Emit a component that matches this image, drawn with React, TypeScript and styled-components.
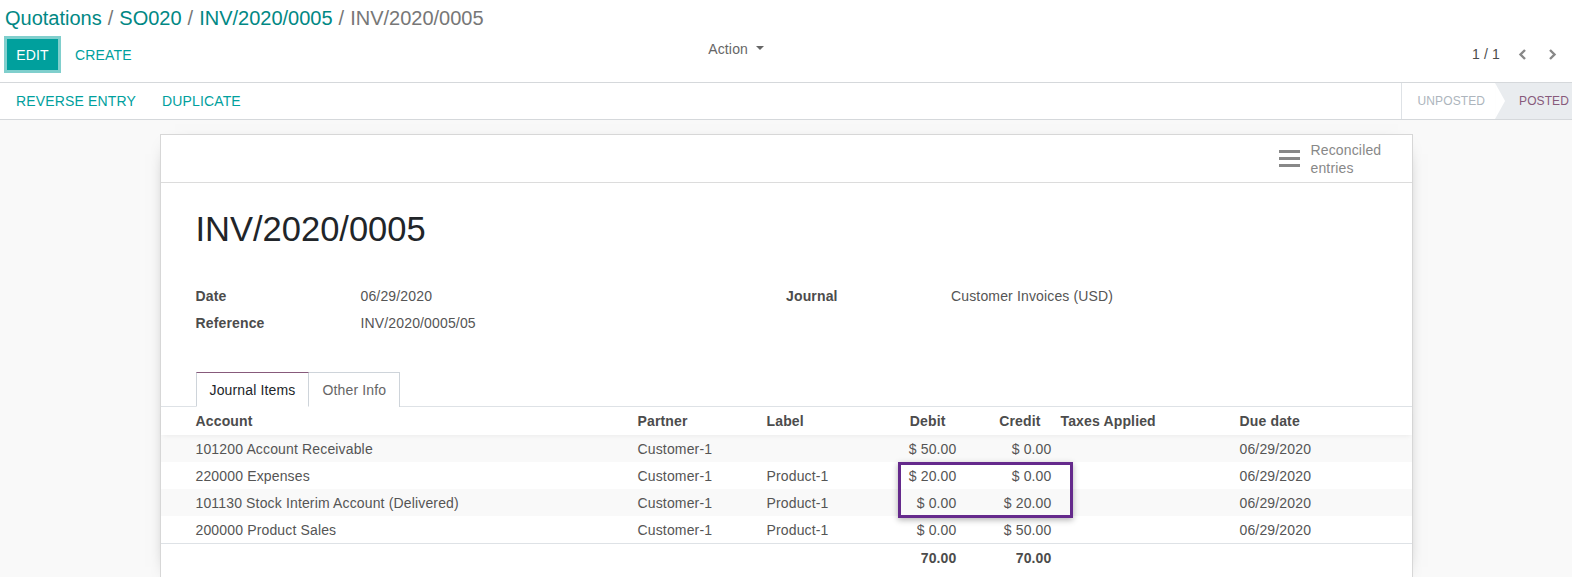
import React from "react";
import styled, { createGlobalStyle } from "styled-components";

const GlobalStyle = createGlobalStyle`
  html, body { margin: 0; padding: 0; }
  body {
    font-family: "Liberation Sans", Arial, sans-serif;
    font-size: 14px;
    letter-spacing: 0.15px;
    color: #4c4c4c;
    background: #f9f9f9;
    overflow: hidden;
  }
  * { box-sizing: border-box; }
`;

const TEAL = "#00A09D";
const TEAL_DARK = "#018884";
const PURPLE = "#875A7B";

const Page = styled.div`
  width: 1572px;
  height: 577px;
  overflow: hidden;
  display: flex;
  flex-direction: column;
  background: #f9f9f9;
`;

const ControlPanel = styled.div`
  background: #fff;
  height: 83px;
  border-bottom: 1px solid #d5d8db;
  display: flex;
  flex-direction: column;
`;

const Breadcrumbs = styled.div`
  height: 36px;
  line-height: 36px;
  padding-left: 5px;
  font-size: 20px;
  letter-spacing: 0;
  color: #777;
  white-space: nowrap;
`;

const Crumb = styled.a<{ $active?: boolean }>`
  color: ${(p) => (p.$active ? "#777" : TEAL_DARK)};
  text-decoration: none;
`;

const Sep = styled.span`
  color: #777;
  padding: 0 6px;
`;

const ButtonsRow = styled.div`
  display: grid;
  grid-template-columns: 786px 1fr;
  height: 46px;
`;

const LeftCell = styled.div`
  display: flex;
  align-items: flex-start;
  padding-left: 4px;
`;

const PrimaryButton = styled.button`
  margin: 3px;
  width: 51px;
  height: 31px;
  border: none;
  background: ${TEAL};
  color: #fff;
  font-family: inherit;
  font-size: 14px;
  letter-spacing: inherit;
  box-shadow: 0 0 0 3px #80cfcd;
  padding: 0;
`;

const LinkButton = styled.button`
  margin-top: 3px;
  margin-left: 2px;
  height: 31px;
  border: none;
  background: transparent;
  color: ${TEAL};
  font-family: inherit;
  font-size: 14px;
  letter-spacing: inherit;
  padding: 0 12px;
`;

const ActionToggle = styled.div`
  margin-left: auto;
  margin-right: 22px;
  height: 26px;
  line-height: 26px;
  display: flex;
  align-items: center;
  gap: 8px;
  color: #666;
  font-size: 14px;
`;

const Caret = styled.span`
  width: 0;
  height: 0;
  border-left: 4px solid transparent;
  border-right: 4px solid transparent;
  border-top: 4px solid #666;
  margin-top: -2px;
`;

const RightCell = styled.div`
  display: flex;
  justify-content: flex-end;
  align-items: flex-start;
  padding-right: 15px;
`;

const Pager = styled.div`
  display: flex;
  align-items: center;
  height: 36px;
  color: #4c4c4c;
  font-size: 14px;
`;

const PagerValue = styled.span`
  margin-right: 18px;
`;

const PagerArrow = styled.span`
  display: inline-flex;
  & + & {
    margin-left: 21px;
  }
`;

const StatusBar = styled.div`
  background: #fff;
  height: 37px;
  border-bottom: 1px solid #d5d8db;
  display: flex;
  align-items: stretch;
  justify-content: space-between;
`;

const StatusButtons = styled.div`
  display: flex;
  align-items: center;
  padding-left: 16px;
  gap: 26px;
`;

const StatusLink = styled.span`
  color: ${TEAL};
  font-size: 14px;
`;

const Stages = styled.div`
  display: flex;
  align-items: stretch;
  border-left: 1px solid #dee2e6;
`;

const Stage = styled.div<{ $current?: boolean }>`
  position: relative;
  display: flex;
  align-items: center;
  font-size: 12px;
  letter-spacing: 0.1px;
  padding: ${(p) => (p.$current ? "0 3px 0 24px" : "0 10px 0 16px")};
  color: ${(p) => (p.$current ? PURPLE : "#adb5bd")};
  background: ${(p) => (p.$current ? "#e9ecef" : "#fff")};
  ${(p) =>
    !p.$current &&
    `
    &::after {
      content: "";
      position: absolute;
      top: 0;
      right: -10px;
      width: 10px;
      height: 100%;
      background: #fff;
      clip-path: polygon(0 0, 100% 50%, 0 100%);
      z-index: 1;
    }
  `}
`;

const SheetArea = styled.div`
  flex: 1;
  padding-top: 14px;
  display: flex;
  justify-content: center;
  overflow: hidden;
`;

const Sheet = styled.div`
  width: 1253px;
  background: #fff;
  border: 1px solid #d7d7d7;
  border-bottom: none;
  box-shadow: 0 5px 20px -15px #000;
`;

const ButtonBox = styled.div`
  height: 48px;
  border-bottom: 1px solid #dcdcdc;
  display: flex;
  justify-content: flex-end;
`;

const StatButton = styled.div`
  width: 152px;
  display: flex;
  align-items: center;
  gap: 11px;
  padding-left: 19px;
  color: #888;
  font-size: 14px;
  line-height: 18px;
`;

const SheetBody = styled.div`
  padding: 24px 35px 0;
`;

const Title = styled.h1`
  margin: 0;
  font-weight: normal;
  font-size: 34.5px;
  letter-spacing: 0;
  line-height: 44px;
  color: #212529;
`;

const Groups = styled.div`
  display: grid;
  grid-template-columns: 1fr 1fr;
  margin-top: 31px;
`;

const FieldGroup = styled.div`
  display: grid;
  grid-template-columns: 165px 1fr;
  grid-auto-rows: 27px;
  align-items: center;
`;

const FieldLabel = styled.div`
  font-weight: bold;
  color: #4c4c4c;
`;

const FieldValue = styled.div`
  color: #555;
`;

const TabsBar = styled.div`
  margin: 36px -35px 0;
  padding: 0 35px;
  display: flex;
  border-bottom: 1px solid #dee2e6;
  height: 35px;
`;

const Tab = styled.div<{ $active?: boolean }>`
  height: 35px;
  padding: 0 13px;
  display: flex;
  align-items: center;
  font-size: 14px;
  border: 1px solid #ced4da;
  border-top-color: ${(p) => (p.$active ? PURPLE : "#ced4da")};
  border-bottom: ${(p) => (p.$active ? "1px solid #fff" : "none")};
  background: #fff;
  color: ${(p) => (p.$active ? "#212529" : "#666")};
  margin-left: ${(p) => (p.$active ? "0" : "-1px")};
  margin-bottom: ${(p) => (p.$active ? "-1px" : "0")};
  position: relative;
  z-index: ${(p) => (p.$active ? 1 : 0)};
`;

const TableWrap = styled.div`
  margin: 0 -35px;
  position: relative;
`;

const COLS = "477px 129px 113px 77px 95px 188px 1fr";

const HeaderRow = styled.div`
  display: grid;
  grid-template-columns: ${COLS};
  height: 28px;
  align-items: center;
  font-weight: bold;
  color: #4c4c4c;
  position: relative;
  z-index: 1;
  box-shadow: 0 3px 5px -2px rgba(0, 0, 0, 0.06);
`;

const Row = styled.div<{ $striped?: boolean }>`
  display: grid;
  grid-template-columns: ${COLS};
  height: 27px;
  align-items: center;
  color: #555;
  background: ${(p) => (p.$striped ? "#f9f9f9" : "#fff")};
`;

const FooterRow = styled.div`
  display: grid;
  grid-template-columns: ${COLS};
  height: 28px;
  align-items: center;
  border-top: 1px solid #dee2e6;
  font-weight: bold;
  color: #4c4c4c;
`;

const Cell = styled.div<{ $num?: boolean; $head?: boolean; $first?: boolean; $pad?: number }>`
  white-space: nowrap;
  text-align: ${(p) => (p.$num ? "right" : "left")};
  padding-left: ${(p) => (p.$first ? "35px" : p.$pad ? `${p.$pad}px` : "0")};
  padding-right: ${(p) => (p.$num && p.$head ? "11px" : "0")};
`;

const Highlight = styled.div`
  position: absolute;
  left: 737px;
  top: 55px;
  width: 175px;
  height: 56px;
  border: 3px solid #652a8c;
  box-shadow: 0 2px 6px rgba(0, 0, 0, 0.3);
  pointer-events: none;
`;

const BarsIcon = () => (
  <svg width="21" height="17" viewBox="0 0 21 17" fill="#888">
    <rect x="0" y="0" width="21" height="3" />
    <rect x="0" y="7" width="21" height="3" />
    <rect x="0" y="14" width="21" height="3" />
  </svg>
);

const Chevron = ({ dir }: { dir: "left" | "right" }) => (
  <svg width="9" height="11" viewBox="0 0 9 11">
    <polyline
      points={dir === "left" ? "7,1 2.5,5.5 7,10" : "2,1 6.5,5.5 2,10"}
      fill="none"
      stroke="#888"
      strokeWidth="2.4"
    />
  </svg>
);

type Line = {
  account: string;
  partner: string;
  label: string;
  debit: string;
  credit: string;
  due: string;
};

const lines: Line[] = [
  { account: "101200 Account Receivable", partner: "Customer-1", label: "", debit: "$ 50.00", credit: "$ 0.00", due: "06/29/2020" },
  { account: "220000 Expenses", partner: "Customer-1", label: "Product-1", debit: "$ 20.00", credit: "$ 0.00", due: "06/29/2020" },
  { account: "101130 Stock Interim Account (Delivered)", partner: "Customer-1", label: "Product-1", debit: "$ 0.00", credit: "$ 20.00", due: "06/29/2020" },
  { account: "200000 Product Sales", partner: "Customer-1", label: "Product-1", debit: "$ 0.00", credit: "$ 50.00", due: "06/29/2020" },
];

export default function App() {
  return (
    <Page>
      <GlobalStyle />
      <ControlPanel>
        <Breadcrumbs>
          <Crumb>Quotations</Crumb>
          <Sep>/</Sep>
          <Crumb>SO020</Crumb>
          <Sep>/</Sep>
          <Crumb>INV/2020/0005</Crumb>
          <Sep>/</Sep>
          <Crumb $active>INV/2020/0005</Crumb>
        </Breadcrumbs>
        <ButtonsRow>
          <LeftCell>
            <PrimaryButton>EDIT</PrimaryButton>
            <LinkButton>CREATE</LinkButton>
            <ActionToggle>
              Action <Caret />
            </ActionToggle>
          </LeftCell>
          <RightCell>
            <Pager>
              <PagerValue>1 / 1</PagerValue>
              <PagerArrow>
                <Chevron dir="left" />
              </PagerArrow>
              <PagerArrow>
                <Chevron dir="right" />
              </PagerArrow>
            </Pager>
          </RightCell>
        </ButtonsRow>
      </ControlPanel>

      <StatusBar>
        <StatusButtons>
          <StatusLink>REVERSE ENTRY</StatusLink>
          <StatusLink>DUPLICATE</StatusLink>
        </StatusButtons>
        <Stages>
          <Stage>UNPOSTED</Stage>
          <Stage $current>POSTED</Stage>
        </Stages>
      </StatusBar>

      <SheetArea>
        <Sheet>
          <ButtonBox>
            <StatButton>
              <BarsIcon />
              <span>
                Reconciled
                <br />
                entries
              </span>
            </StatButton>
          </ButtonBox>
          <SheetBody>
            <Title>INV/2020/0005</Title>
            <Groups>
              <FieldGroup>
                <FieldLabel>Date</FieldLabel>
                <FieldValue>06/29/2020</FieldValue>
                <FieldLabel>Reference</FieldLabel>
                <FieldValue>INV/2020/0005/05</FieldValue>
              </FieldGroup>
              <FieldGroup>
                <FieldLabel>Journal</FieldLabel>
                <FieldValue>Customer Invoices (USD)</FieldValue>
              </FieldGroup>
            </Groups>
            <TabsBar>
              <Tab $active>Journal Items</Tab>
              <Tab>Other Info</Tab>
            </TabsBar>
            <TableWrap>
              <HeaderRow>
                <Cell $first>Account</Cell>
                <Cell>Partner</Cell>
                <Cell>Label</Cell>
                <Cell $num $head>Debit</Cell>
                <Cell $num $head>Credit</Cell>
                <Cell $pad={9}>Taxes Applied</Cell>
                <Cell>Due date</Cell>
              </HeaderRow>
              {lines.map((l, i) => (
                <Row key={i} $striped={i % 2 === 0}>
                  <Cell $first>{l.account}</Cell>
                  <Cell>{l.partner}</Cell>
                  <Cell>{l.label}</Cell>
                  <Cell $num>{l.debit}</Cell>
                  <Cell $num>{l.credit}</Cell>
                  <Cell $pad={9}></Cell>
                  <Cell>{l.due}</Cell>
                </Row>
              ))}
              <FooterRow>
                <Cell $first></Cell>
                <Cell></Cell>
                <Cell></Cell>
                <Cell $num>70.00</Cell>
                <Cell $num>70.00</Cell>
                <Cell></Cell>
                <Cell></Cell>
              </FooterRow>
              <Highlight />
            </TableWrap>
          </SheetBody>
        </Sheet>
      </SheetArea>
    </Page>
  );
}
